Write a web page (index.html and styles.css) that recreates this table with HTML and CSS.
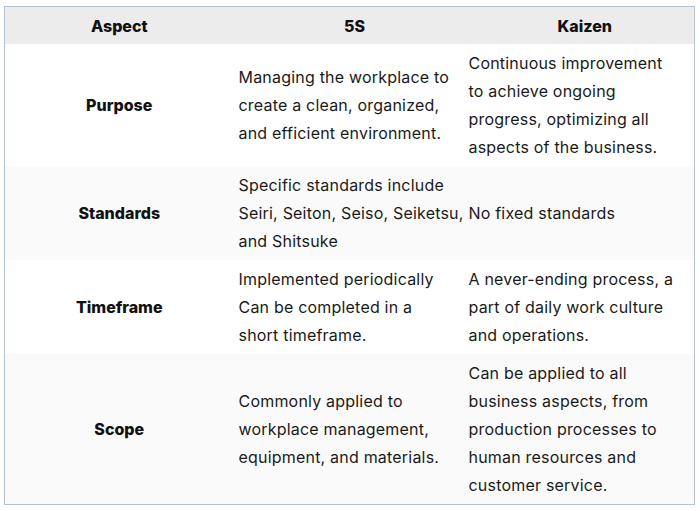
FILE: index.html
```html
<!DOCTYPE html>
<html>
<head>
<meta charset="utf-8">
<link rel="stylesheet" href="styles.css">
</head>
<body>
<table class="cmp">
  <colgroup>
    <col class="c1">
    <col class="c2">
    <col class="c3">
  </colgroup>
  <thead>
    <tr>
      <th>Aspect</th>
      <th class="shift">5S</th>
      <th class="shift">Kaizen</th>
    </tr>
  </thead>
  <tbody>
    <tr>
      <td class="label">Purpose</td>
      <td>Managing the workplace to<br>create a clean, organized,<br>and efficient environment.</td>
      <td>Continuous improvement<br>to achieve ongoing<br>progress, optimizing all<br>aspects of the business.</td>
    </tr>
    <tr class="alt">
      <td class="label">Standards</td>
      <td>Specific standards include<br>Seiri, Seiton, Seiso, Seiketsu,<br>and Shitsuke</td>
      <td>No fixed standards</td>
    </tr>
    <tr>
      <td class="label">Timeframe</td>
      <td>Implemented periodically<br>Can be completed in a<br>short timeframe.</td>
      <td>A never-ending process, a<br>part of daily work culture<br>and operations.</td>
    </tr>
    <tr class="alt">
      <td class="label">Scope</td>
      <td>Commonly applied to<br>workplace management,<br>equipment, and materials.</td>
      <td>Can be applied to all<br>business aspects, from<br>production processes to<br>human resources and<br>customer service.</td>
    </tr>
  </tbody>
</table>
</body>
</html>
```
FILE: styles.css
```css
html, body {
  margin: 0;
  padding: 0;
  background: #ffffff;
}
body {
  padding: 6px 0 0 4px;
  font-family: "Inter", "Open Sans", sans-serif;
  font-size: 16px;
  color: #1a1a1a;
}
.cmp {
  border-collapse: collapse;
  width: 690px;
  border: 1.5px solid #b3c3d6;
  table-layout: fixed;
}
.c1 { width: 229px; }
.c2 { width: 230px; }
.c3 { width: 231px; }
.cmp th {
  background: #ececec;
  font-weight: 800;
  text-align: center;
  height: 37px;
  padding: 0 5px;
  line-height: 28px;
  color: #111;
}
.cmp th.shift {
  padding: 0 0 0 12px;
}
.cmp td {
  padding: 5px 5px;
  line-height: 28px;
  vertical-align: middle;
  text-align: left;
  letter-spacing: 0.2px;
  white-space: nowrap;
}
.cmp td.label {
  text-align: center;
  font-weight: 800;
  letter-spacing: 0;
  color: #111;
}
.cmp tr.alt td {
  background: #fafafa;
}
```
